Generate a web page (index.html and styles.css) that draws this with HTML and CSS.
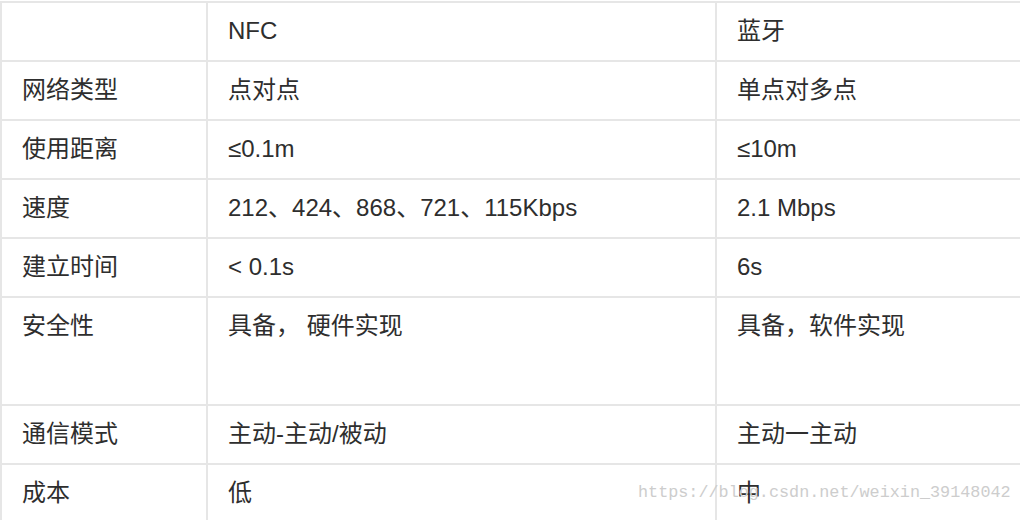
FILE: index.html
```html
<!DOCTYPE html>
<html lang="zh-CN">
<head>
<meta charset="utf-8">
<title>NFC 与 蓝牙</title>
<link rel="stylesheet" href="styles.css">
</head>
<body>
<div class="page">
  <table class="cmp">
    <colgroup>
      <col class="c1">
      <col class="c2">
      <col class="c3">
    </colgroup>
    <tbody>
      <tr><td></td><td>NFC</td><td>蓝牙</td></tr>
      <tr><td>网络类型</td><td>点对点</td><td>单点对多点</td></tr>
      <tr><td>使用距离</td><td>≤0.1m</td><td>≤10m</td></tr>
      <tr><td>速度</td><td>212、424、868、721、115Kbps</td><td>2.1 Mbps</td></tr>
      <tr><td>建立时间</td><td>&lt; 0.1s</td><td>6s</td></tr>
      <tr class="tall"><td>安全性</td><td>具备， 硬件实现</td><td>具备，软件实现</td></tr>
      <tr><td>通信模式</td><td>主动-主动/被动</td><td>主动一主动</td></tr>
      <tr><td>成本</td><td>低</td><td>中</td></tr>
    </tbody>
  </table>
  <div class="watermark">https://blog.csdn.net/weixin_39148042</div>
</div>
</body>
</html>
```

FILE: styles.css
```css
html, body {
  margin: 0;
  padding: 0;
  background: #ffffff;
}
body {
  width: 1020px;
  height: 520px;
  overflow: hidden;
}
.page {
  position: relative;
  width: 1020px;
  height: 520px;
  overflow: hidden;
}
.cmp {
  border-collapse: collapse;
  table-layout: fixed;
  width: 1035px;
  margin-top: 1px;
  font-family: "Liberation Sans", "Noto Sans CJK SC", sans-serif;
  font-size: 24px;
  color: #2e2e2e;
}
.c1 { width: 206px; }
.c2 { width: 509px; }
.c3 { width: 320px; }
.cmp td {
  border: 2px solid #e6e6e6;
  padding: 11px 21px 13px 20px;
  line-height: 33px;
  height: 33px;
  vertical-align: top;
  white-space: nowrap;
}
.cmp tr.tall td {
  height: 82px;
}
.watermark {
  position: absolute;
  left: 638px;
  top: 483px;
  font-family: "Liberation Mono", monospace;
  font-size: 16.8px;
  color: #cdcdcd;
  white-space: nowrap;
}
```
